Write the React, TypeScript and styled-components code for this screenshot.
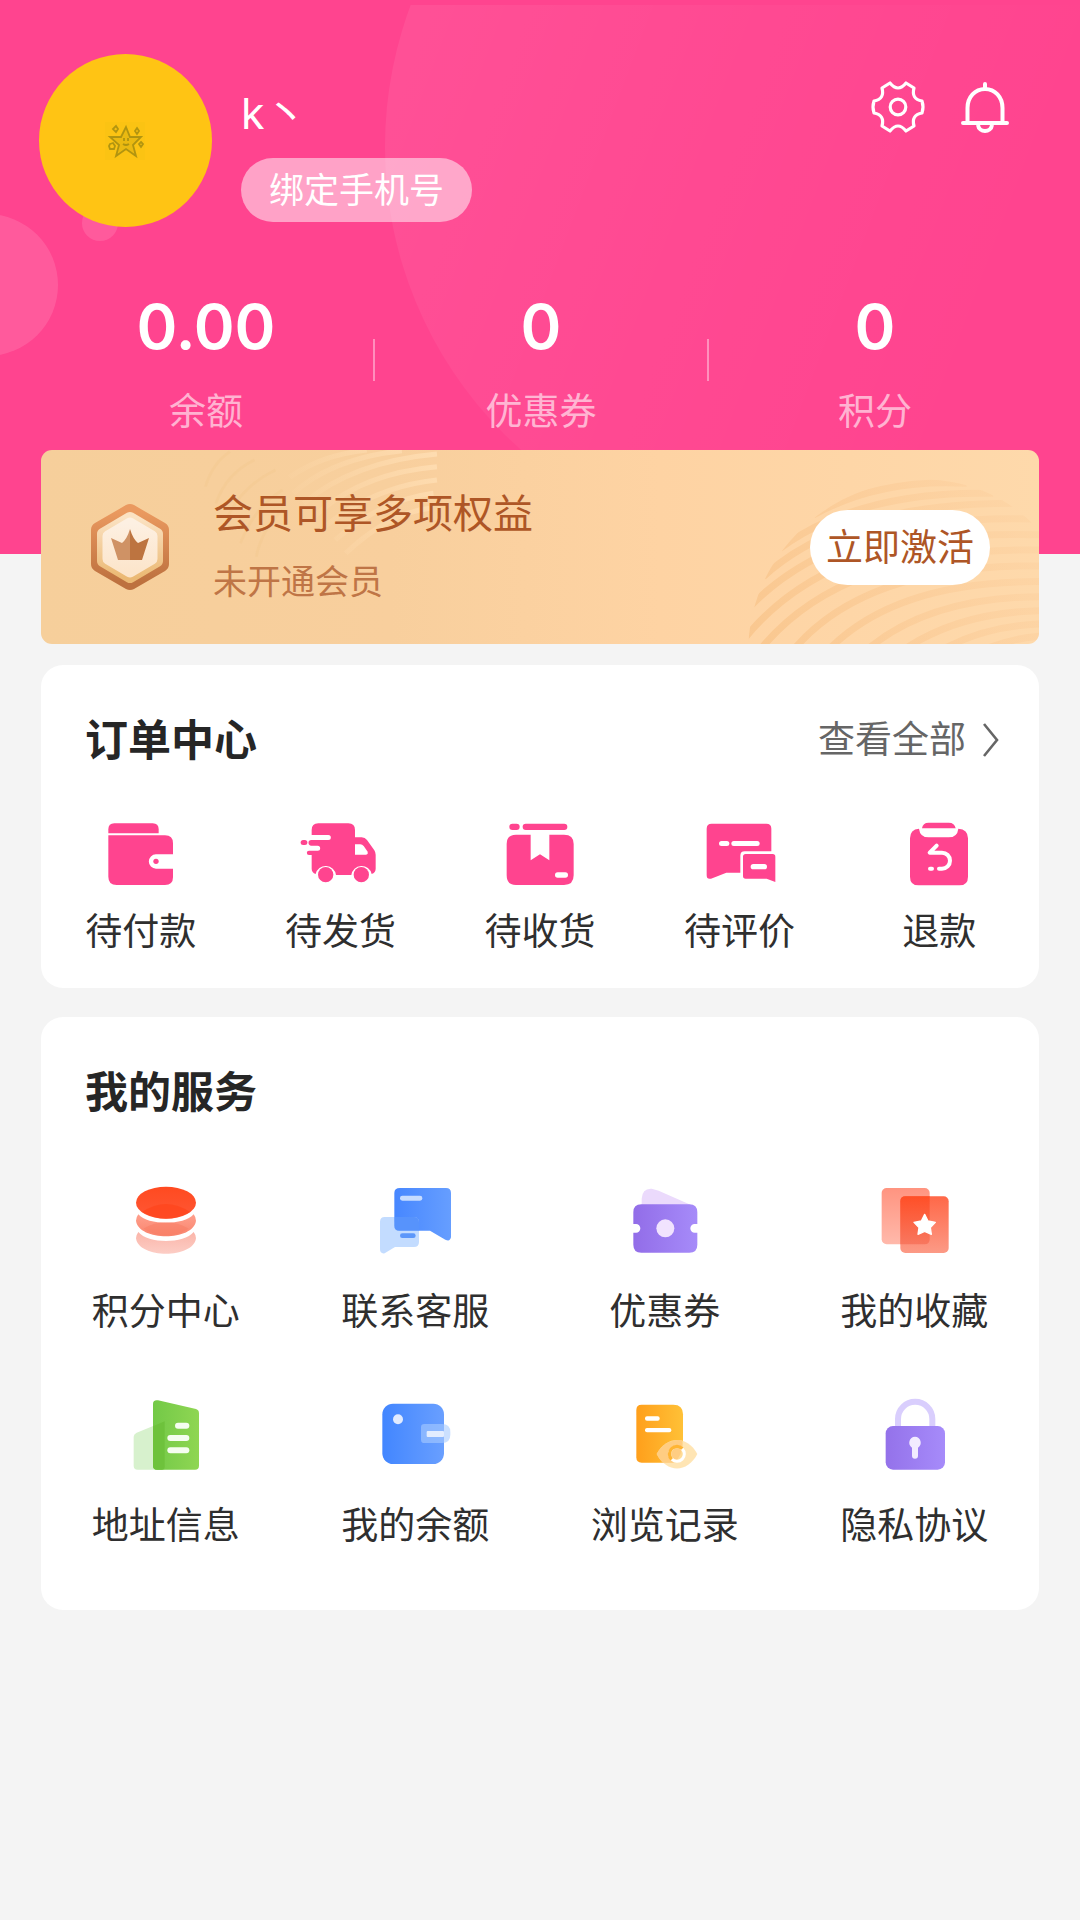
import React from "react";
import styled, { createGlobalStyle } from "styled-components";

const PINK = "#ff448f";

const GlobalStyle = createGlobalStyle`
  * { box-sizing: border-box; }
  body {
    margin: 0;
    background: #f4f4f4;
    color: #2f2f2f;
    font-family: "Noto Sans CJK SC", "Noto Sans", sans-serif;
  }
  a { color: inherit; text-decoration: none; }
  button { font: inherit; border: 0; cursor: pointer; }
  ul { list-style: none; margin: 0; padding: 0; }
  svg { display: block; flex: none; }
`;

const Page = styled.main`
  padding-bottom: 60px;
`;

const Hero = styled.header`
  position: relative;
  padding: 54px 39px 119px;
  background: ${PINK};
  color: #fff;
  overflow: hidden;
`;

const HeroArt = styled.svg`
  position: absolute;
  inset: 0;
  width: 100%;
  height: 100%;
`;

const Profile = styled.div`
  position: relative;
  display: flex;
  gap: 29px;
`;

const Avatar = styled.div`
  width: 173px;
  height: 173px;
  flex: none;
  display: grid;
  place-items: center;
  border-radius: 50%;
  background: #ffc414;
`;

const Identity = styled.div`
  flex: 1;
  display: flex;
  flex-direction: column;
  align-items: flex-start;
  gap: 15px;
  padding-top: 29px;
`;

const Name = styled.div`
  font-family: Inter, "Noto Sans CJK SC", sans-serif;
  font-size: 43px;
  line-height: 60px;
`;

const BindButton = styled.button`
  height: 64px;
  padding: 0 28px 4px;
  border-radius: 32px;
  background: rgba(255, 255, 255, 0.5);
  color: #fff;
  font-size: 35px;
  line-height: 60px;
`;

const Tools = styled.div`
  display: flex;
  align-items: flex-start;
  gap: 27px;
  padding: 23px 26px 0 0;
`;

const ToolButton = styled.button`
  padding: 0;
  background: none;
  color: #fff;
`;

const Stats = styled.div`
  position: relative;
  display: grid;
  grid-template-columns: repeat(3, 1fr);
  align-items: center;
  margin-top: 58px;
`;

const Stat = styled.a`
  display: flex;
  align-items: center;

  & + &::before {
    content: "";
    width: 2px;
    height: 42px;
    background: rgba(255, 255, 255, 0.4);
  }
`;

const StatBody = styled.span`
  flex: 1;
  display: flex;
  flex-direction: column;
  gap: 14px;
  text-align: center;
`;

const StatValue = styled.strong`
  font-family: Inter, "Noto Sans CJK SC", sans-serif;
  font-size: 62px;
  font-weight: 600;
  line-height: 84px;
`;

const StatLabel = styled.span`
  color: rgba(255, 255, 255, 0.6);
  font-size: 37px;
  line-height: 52px;
`;

const MemberCard = styled.section`
  position: relative;
  display: flex;
  align-items: center;
  min-height: 194px;
  margin: -104px 41px 21px;
  padding: 0 49px;
  border-radius: 11px;
  background: linear-gradient(90deg, #f6cf9b 0%, #f8cf9d 35%, #fed3a3 62%, #fed9ab 100%);
  overflow: hidden;
`;

const MemberArt = styled.svg`
  position: absolute;
  inset: 0;
  width: 100%;
  height: 100%;
`;

const MemberText = styled.div`
  position: relative;
  flex: 1;
  display: flex;
  flex-direction: column;
  gap: 17px;
  margin-left: 43px;
  padding-bottom: 4px;
`;

const MemberTitle = styled.div`
  color: #ae5626;
  font-size: 40px;
  line-height: 52px;
`;

const MemberNote = styled.div`
  color: #bf7546;
  font-size: 34px;
  line-height: 52px;
`;

const ActivateButton = styled.button`
  position: relative;
  height: 75px;
  padding: 0 16px 4px;
  border-radius: 38px;
  background: #fff;
  color: #ae5626;
  font-size: 37px;
  line-height: 60px;
`;

const Card = styled.section<{ $foot: number }>`
  margin: 0 41px 29px;
  padding: 42px 0 ${(p) => p.$foot}px;
  border-radius: 22px;
  background: #fff;
`;

const CardHead = styled.div<{ $gap: number }>`
  display: flex;
  justify-content: space-between;
  align-items: center;
  margin-bottom: ${(p) => p.$gap}px;
  padding: 0 40px 0 44px;
`;

const CardTitle = styled.h2`
  margin: 0;
  color: #262626;
  font-size: 43px;
  font-weight: 700;
  line-height: 60px;
`;

const MoreLink = styled.a`
  display: flex;
  align-items: center;
  gap: 17px;
  color: #666;
  font-size: 37px;
  line-height: 60px;
`;

const Grid = styled.ul<{ $columns: number }>`
  display: grid;
  grid-template-columns: repeat(${(p) => p.$columns}, 1fr);
  row-gap: 57px;
`;

const Entry = styled.a<{ $gap: number }>`
  display: flex;
  flex-direction: column;
  align-items: center;
  gap: ${(p) => p.$gap}px;
  font-size: 37px;
  line-height: 52px;
`;

const StarDoodle = () => (
  <svg width="44" height="40" viewBox="0 0 44 40" fill="none" stroke="#a08a10" strokeOpacity="0.8" strokeWidth="1.8" aria-hidden="true">
    <rect x="1" y="1" width="40" height="38" fill="#f8c312" stroke="none" opacity="0.6" />
    <path d="M22 6l4 10 11 0-8 8 3 11-10-7-10 7 3-11-9-8 11 0z" fill="#d9b010" fillOpacity="0.5" />
    <path d="M20 17v3M24 17v3M19 23q3 2 6 0" />
    <path d="M12 5l2 3-2 3-3-3zM33 7l2 3-2 3-2-3zM37 21l2 2-2 3-2-3zM6 23l3-1 2 3-1 3H6l-1-3z" />
  </svg>
);

const GearIcon = () => (
  <svg width="60" height="60" viewBox="-30 -30 60 60" fill="none" stroke="currentColor" strokeWidth="3.200" strokeLinejoin="round" aria-hidden="true">
    <circle r="7.800" />
    <path d="M-8-24Q-4-19 0-19T8-24L16-19Q13-8 24-6Q26 0 24 6Q13 8 16 19L8 24Q4 19 0 19T-8 24L-16 19Q-13 8-24 6Q-26 0-24-6Q-13-8-16-19Z" />
  </svg>
);

const BellIcon = () => (
  <svg width="60" height="60" viewBox="-30 -30 60 60" fill="none" stroke="currentColor" strokeWidth="4" strokeLinecap="round" aria-hidden="true">
    <path d="M0-23v4M-17.500 15V1C-17.500-10-10-18 0-18S17.500-10 17.500 1V15M-22 16H22" />
    <path d="M-7 18C-6 26 6 26 7 18" strokeLinecap="butt" />
  </svg>
);

const HeroBackdrop = () => (
  <HeroArt viewBox="0 0 1080 554" preserveAspectRatio="xMidYMin slice" aria-hidden="true">
    <defs>
      <linearGradient id="glow" x1="0" y1="0.3" x2="0.8" y2="0.6">
        <stop offset="0" stopColor="#fff" stopOpacity="0.07" />
        <stop offset="0.5" stopColor="#fff" stopOpacity="0.03" />
        <stop offset="1" stopColor="#fff" stopOpacity="0" />
      </linearGradient>
      <clipPath id="heroClip">
        <rect y="5" width="1080" height="549" />
      </clipPath>
    </defs>
    <circle cx="790" cy="147" r="405" fill="url(#glow)" clipPath="url(#heroClip)" />
    <circle cx="-13" cy="285" r="71" fill="#fff" fillOpacity="0.12" />
    <circle cx="100" cy="223" r="18" fill="#fff" fillOpacity="0.12" />
  </HeroArt>
);

const MemberBackdrop = () => (
  <MemberArt viewBox="0 0 998 194" preserveAspectRatio="none" aria-hidden="true">
    <defs>
      <linearGradient id="duneR" gradientUnits="userSpaceOnUse" x1="150" y1="600" x2="1018" y2="200">
        <stop offset="0" stopColor="#f9c68d" stopOpacity="0.9" />
        <stop offset="1" stopColor="#fbcb98" stopOpacity="0.25" />
      </linearGradient>
      <linearGradient id="duneL" gradientUnits="userSpaceOnUse" x1="700" y1="200" x2="1160" y2="40">
        <stop offset="0" stopColor="#fdd9ab" stopOpacity="0" />
        <stop offset="1" stopColor="#fedcb0" stopOpacity="1" />
      </linearGradient>
      <clipPath id="discR">
        <path d="M145 612C160 330 400 118 680 118C830 125 930 180 1018 270V612z" />
      </clipPath>
    </defs>
    <g transform="translate(659 -10) scale(0.3333)" fill="none" stroke="url(#duneR)" strokeWidth="21" clipPath="url(#discR)">
      <path d="M340 225Q540 115 800 130" />
      <path d="M240 325Q480 150 880 160" />
      <path d="M190 410Q430 190 940 190" />
      <path d="M150 500Q420 220 1000 237" />
      <path d="M130 600Q400 260 1030 285" />
      <path d="M180 630Q430 320 1030 330" />
      <path d="M280 630Q500 370 1030 378" />
      <path d="M385 630Q590 420 1030 425" />
      <path d="M500 630Q690 470 1030 470" />
      <path d="M610 630Q780 515 1030 512" />
      <path d="M725 630Q860 555 1030 552" />
      <path d="M850 630Q930 595 1030 588" />
    </g>
    <g transform="translate(-11 -10) scale(0.3508 0.3333)" fill="none" stroke="url(#duneL)" strokeWidth="15">
      <path d="M740 112Q830 45 960 30" />
      <path d="M750 160Q860 55 1060 32" />
      <path d="M780 190Q920 65 1160 42" />
      <path d="M810 230Q940 100 1160 80" />
      <path d="M840 260Q980 140 1160 120" />
      <path d="M870 300Q1000 180 1150 160" />
      <path d="M900 340Q1020 220 1140 205" />
    </g>
    <g transform="translate(-11 -10) scale(0.3508 0.3333)" fill="none" stroke="#f3c78f" strokeOpacity="0.4" strokeWidth="8">
      <path d="M500 140Q520 70 570 35" />
      <path d="M530 190Q560 100 640 60" />
      <path d="M560 240Q600 140 700 90" />
      <path d="M600 310Q640 200 720 150" />
      <path d="M645 350Q660 270 720 210" />
    </g>
  </MemberArt>
);

const Badge = styled.svg`
  position: relative;
`;

const CrownBadge = () => (
  <Badge width="80" height="88" viewBox="0 0 80 88" strokeLinejoin="round" aria-hidden="true">
    <defs>
      <linearGradient id="rim" x1="0" y1="0" x2="0" y2="1">
        <stop offset="0" stopColor="#ea995f" />
        <stop offset="1" stopColor="#bd713f" />
      </linearGradient>
      <linearGradient id="ring" x1="0" y1="0" x2="0" y2="1">
        <stop offset="0" stopColor="#fbe2c2" />
        <stop offset="1" stopColor="#ebb974" />
      </linearGradient>
      <linearGradient id="face" x1="0" y1="0" x2="0" y2="1">
        <stop offset="0" stopColor="#fdf0e2" />
        <stop offset="1" stopColor="#fce5cb" />
      </linearGradient>
    </defs>
    <path d="M40 9L71 27V61L40 79L9 61V27z" fill="url(#rim)" stroke="url(#rim)" strokeWidth="16" />
    <path d="M40 15L67 31V58L40 74L13 58V31z" fill="url(#ring)" stroke="url(#ring)" strokeWidth="12" />
    <path d="M40 20L62 33V56L40 69L18 56V33z" fill="url(#face)" stroke="url(#face)" strokeWidth="11" />
    <path d="M40 26V57H28L21 35L32 40Q37 36 40 26z" fill="#cf9265" />
    <path d="M40 26V57H52L59 35L48 40Q43 36 40 26z" fill="#bd7440" />
  </Badge>
);

const Chevron = () => (
  <svg width="16" height="40" viewBox="0 -6 16 40" fill="none" stroke="#666" strokeWidth="2.600" aria-hidden="true">
    <path d="M1 1L14 17L1 33" />
  </svg>
);

const OrderIcon = ({ x, children }: { x: number; children: React.ReactNode }) => (
  <svg width="84" height="72" viewBox={`${x} 78 252 216`} fill={PINK} aria-hidden="true">
    {children}
  </svg>
);

const WalletIcon = () => (
  <OrderIcon x={117}>
    <path d="M145 130V118Q145 100 163 100H278Q296 100 296 118V130z" />
    <path d="M145 136H315Q339 136 339 160V193H288A21 21 0 0 0 288 236H339V262Q339 285 315 285H170Q145 285 145 260z" />
    <circle cx="288" cy="214" r="8" />
  </OrderIcon>
);

const TruckIcon = () => (
  <OrderIcon x={714}>
    <path d="M755 135V120Q755 100 775 100H865Q885 100 885 120V142H905Q915 142 921 150L943 181Q947 187 947 194V236Q947 248 935 252A31 31 0 0 0 874 255H828A31 31 0 0 0 767 252Q755 247 755 236V195H747A6 6 0 0 1 747 182H773A7 7 0 0 0 773 167H754A8 8 0 0 1 754 150H805A7 7 0 0 0 805 135z" />
    <path d="M885 163H901Q907 163 911 168L922 184Q926 194 918 194H885z" fill="#fff" />
    <circle cx="797" cy="254" r="23" />
    <circle cx="904" cy="254" r="23" />
    <rect x="722" y="150" width="20" height="15" rx="7.500" />
  </OrderIcon>
);

const ParcelIcon = () => (
  <OrderIcon x={1314}>
    <rect x="1348" y="101" width="31" height="19" rx="9.500" />
    <rect x="1388" y="101" width="134" height="19" rx="9.500" />
    <path d="M1412 134V211L1440 193L1468 211V134H1512Q1541 134 1541 162V256Q1541 285 1512 285H1368Q1340 285 1340 256V162Q1340 134 1368 134z" />
    <rect x="1485" y="247" width="39" height="16" rx="8" fill="#fff" />
  </OrderIcon>
);

const ReviewIcon = () => (
  <OrderIcon x={413}>
    <path d="M454 101H618Q633 101 633 116V184H553Q540 184 540 197V248H498L452 266Q439 269 439 256V116Q439 101 454 101z" />
    <path d="M556 192H637Q645 192 645 200V276L619 266H556Q548 266 548 258V200Q548 192 556 192z" />
    <g fill="#fff">
      <rect x="476" y="153" width="31" height="15" rx="7.500" />
      <rect x="513" y="153" width="85" height="15" rx="7.500" />
      <rect x="571" y="222" width="49" height="16" rx="8" />
    </g>
  </OrderIcon>
);

const RefundIcon = () => (
  <OrderIcon x={1011}>
    <path d="M1086 115Q1088 98 1106 98H1166Q1184 98 1187 115z" />
    <path d="M1077 116Q1080 142 1106 142H1166Q1192 142 1195 116Q1224 118 1224 145V260Q1224 286 1198 286H1076Q1050 286 1050 260V145Q1050 118 1077 116z" />
    <g fill="none" stroke="#fff" strokeWidth="12" strokeLinecap="round" strokeLinejoin="round">
      <path d="M1130 167L1109 188H1146A23 23 0 0 1 1146 236H1137" />
      <path d="M1110 236H1116" />
    </g>
  </OrderIcon>
);

const ServiceIcon = ({ x, y = 54, children }: { x: number; y?: number; children: React.ReactNode }) => (
  <svg width="84" height="84" viewBox={`${x} ${y} 252 252`} aria-hidden="true">
    {children}
  </svg>
);

const Fade = ({ id, from, to, down }: { id: string; from: string; to: string; down?: boolean }) => (
  <defs>
    <linearGradient id={id} x1="0" y1="0" x2={down ? "0" : "1"} y2={down ? "1" : "0"}>
      <stop offset="0" stopColor={from} />
      <stop offset="1" stopColor={to} />
    </linearGradient>
  </defs>
);

const CoinsIcon = () => (
  <ServiceIcon x={192}>
    <Fade id="coinTop" from="#ff4a20" to="#ff5735" down />
    <Fade id="coinMid" from="#ff9f8c" to="#f9856e" down />
    <Fade id="coinLow" from="#fbb5a9" to="#fccdc5" down />
    <ellipse cx="318" cy="128" rx="90" ry="48" fill="url(#coinTop)" />
    <path d="M246 156Q318 108 390 156Q318 196 246 156z" fill="#ff451b" opacity="0.7" />
    <path d="M235 163C264 197 372 197 401 163Q408 172 408 182C400 244 236 244 228 182Q228 172 235 163z" fill="url(#coinMid)" />
    <path d="M250 206Q318 168 386 206Q318 246 250 206z" fill="#f87b62" opacity="0.5" />
    <path d="M235 216C264 252 372 252 401 216Q408 225 408 235C400 297 236 297 228 235Q228 225 235 216z" fill="url(#coinLow)" />
  </ServiceIcon>
);

const ChatIcon = () => (
  <ServiceIcon x={939}>
    <Fade id="chat" from="#4787ff" to="#669eff" />
    <path d="M1020 84H1158Q1173 84 1173 99V232Q1170 246 1156 239L1110 212H1018Q1003 212 1003 197V99Q1003 84 1020 84z" fill="url(#chat)" />
    <path d="M974 171H1062Q1077 171 1077 186V246Q1077 261 1062 261H1005L974 280Q960 282 960 268V186Q960 171 974 171z" fill="#b6d4ff" fillOpacity="0.82" />
    <path d="M1003 171H1062Q1077 171 1077 186V212H1018Q1003 212 1003 197z" fill="#4a8afc" fillOpacity="0.85" />
    <rect x="1020" y="107" width="67" height="15" rx="7" fill="#c7dcff" />
    <rect x="1020" y="220" width="47" height="14" rx="7" fill="#5c97fa" />
  </ServiceIcon>
);

const CouponIcon = () => (
  <ServiceIcon x={189}>
    <Fade id="coupon" from="#926de8" to="#a68bf9" />
    <path d="M245 140V116Q247 84 275 86L296 92L400 138z" fill="#ebdafc" />
    <path d="M244 133H388Q412 133 412 157V192H404A13 13 0 0 0 404 218H412V254Q412 278 388 278H244Q220 278 220 254V218H228A13 13 0 0 0 228 192H220V157Q220 133 244 133z" fill="url(#coupon)" />
    <circle cx="316" cy="205" r="27" fill="#f1e3fe" />
  </ServiceIcon>
);

const FavoriteIcon = () => (
  <ServiceIcon x={936}>
    <Fade id="favBack" from="#ff9480" to="#ffb9ab" down />
    <Fade id="favFront" from="#ff6848" to="#fc9a86" down />
    <Fade id="favOver" from="#ff4f27" to="#f8775f" down />
    <rect x="965" y="84" width="144" height="169" rx="15" fill="url(#favBack)" />
    <rect x="1021" y="109" width="145" height="170" rx="15" fill="url(#favFront)" />
    <path d="M1036 109H1109V238Q1109 253 1094 253H1021V124Q1021 109 1036 109z" fill="url(#favOver)" />
    <path d="M1094 163L1104 183L1126 187L1111 203L1114 223L1094 214L1074 223L1077 203L1062 187L1084 183z" fill="#fff" stroke="#fff" strokeWidth="4" strokeLinejoin="round" />
  </ServiceIcon>
);

const AddressIcon = () => (
  <ServiceIcon x={192} y={66}>
    <Fade id="tower" from="#73c947" to="#8fd653" />
    <path d="M230 188L314 154V299H233Q221 299 221 287V200Q221 192 230 188z" fill="#d7f1cd" />
    <path d="M294 91L408 117Q417 120 417 130V287Q417 299 405 299H291Q279 299 279 287V102Q279 89 294 91z" fill="url(#tower)" />
    <path d="M279 169L314 154V290Q314 299 305 299H291Q279 299 279 287z" fill="#6ec23c" />
    <g fill="#f5fdf0">
      <rect x="345" y="158" width="43" height="18" rx="9" />
      <rect x="322" y="195" width="66" height="18" rx="9" />
      <rect x="322" y="232" width="66" height="18" rx="9" />
    </g>
  </ServiceIcon>
);

const BalanceIcon = () => (
  <ServiceIcon x={939} y={66}>
    <Fade id="balance" from="#4286ff" to="#699fff" />
    <rect x="967" y="101" width="185" height="181" rx="32" fill="url(#balance)" />
    <circle cx="1014" cy="148" r="15" fill="#e1ebff" />
    <path d="M1093 162H1146Q1171 162 1171 186V194Q1171 219 1146 219H1093Q1083 219 1083 209V172Q1083 162 1093 162z" fill="#a9cbff" fillOpacity="0.6" />
    <rect x="1100" y="183" width="52" height="18" rx="3" fill="#e3edff" />
  </ServiceIcon>
);

const HistoryIcon = () => (
  <ServiceIcon x={189} y={66}>
    <Fade id="record" from="#ff9f1b" to="#ffc137" />
    <path d="M245 104H340Q369 104 369 133V250Q369 278 341 278H245Q229 278 229 262V120Q229 104 245 104z" fill="url(#record)" />
    <rect x="255" y="139" width="44" height="13" rx="6" fill="#fff" />
    <rect x="255" y="174" width="79" height="13" rx="6" fill="#fff" />
    <path d="M290 252C320 196 382 196 412 252C382 310 320 310 290 252z" fill="#ffe1a7" fillOpacity="0.85" />
    <path d="M290 252C306 222 335 207 367 211Q369 260 341 278H308Q298 268 290 252z" fill="#ffcd82" />
    <circle cx="351" cy="252" r="22" fill="none" stroke="#fff" strokeWidth="9" />
    <path d="M335 268A22 22 0 0 1 367 236" fill="none" stroke="#ffb534" strokeWidth="10" />
  </ServiceIcon>
);

const PrivacyIcon = () => (
  <ServiceIcon x={936} y={66}>
    <Fade id="lock" from="#9472ea" to="#a68bfa" />
    <path d="M1014 170V147A51 51 0 0 1 1117 147V170" fill="none" stroke="#d9cefd" strokeWidth="18" />
    <rect x="977" y="168" width="178" height="131" rx="22" fill="url(#lock)" />
    <path d="M1065 200A18 18 0 0 1 1074 233V257A9 9 0 0 1 1056 257V233A18 18 0 0 1 1065 200z" fill="#f2ecff" />
  </ServiceIcon>
);

const stats = [
  { value: "0.00", label: "余额" },
  { value: "0", label: "优惠券" },
  { value: "0", label: "积分" },
];

const orders = [
  { label: "待付款", Icon: WalletIcon },
  { label: "待发货", Icon: TruckIcon },
  { label: "待收货", Icon: ParcelIcon },
  { label: "待评价", Icon: ReviewIcon },
  { label: "退款", Icon: RefundIcon },
];

const services = [
  { label: "积分中心", Icon: CoinsIcon },
  { label: "联系客服", Icon: ChatIcon },
  { label: "优惠券", Icon: CouponIcon },
  { label: "我的收藏", Icon: FavoriteIcon },
  { label: "地址信息", Icon: AddressIcon },
  { label: "我的余额", Icon: BalanceIcon },
  { label: "浏览记录", Icon: HistoryIcon },
  { label: "隐私协议", Icon: PrivacyIcon },
];

export default function App() {
  return (
    <Page lang="zh-CN">
      <GlobalStyle />
      <Hero>
        <HeroBackdrop />
        <Profile>
          <Avatar>
            <StarDoodle />
          </Avatar>
          <Identity>
            <Name>k丶</Name>
            <BindButton type="button">绑定手机号</BindButton>
          </Identity>
          <Tools>
            <ToolButton type="button" aria-label="设置">
              <GearIcon />
            </ToolButton>
            <ToolButton type="button" aria-label="消息">
              <BellIcon />
            </ToolButton>
          </Tools>
        </Profile>
        <Stats>
          {stats.map(({ value, label }) => (
            <Stat key={label} href="#">
              <StatBody>
                <StatValue>{value}</StatValue>
                <StatLabel>{label}</StatLabel>
              </StatBody>
            </Stat>
          ))}
        </Stats>
      </Hero>

      <MemberCard>
        <MemberBackdrop />
        <CrownBadge />
        <MemberText>
          <MemberTitle>会员可享多项权益</MemberTitle>
          <MemberNote>未开通会员</MemberNote>
        </MemberText>
        <ActivateButton type="button">立即激活</ActivateButton>
      </MemberCard>

      <Card $foot={33}>
        <CardHead $gap={49}>
          <CardTitle>订单中心</CardTitle>
          <MoreLink href="#">
            查看全部
            <Chevron />
          </MoreLink>
        </CardHead>
        <Grid $columns={5}>
          {orders.map(({ label, Icon }) => (
            <li key={label}>
              <Entry href="#" $gap={15}>
                <Icon />
                {label}
              </Entry>
            </li>
          ))}
        </Grid>
      </Card>

      <Card $foot={61}>
        <CardHead $gap={59}>
          <CardTitle>我的服务</CardTitle>
        </CardHead>
        <Grid $columns={4}>
          {services.map(({ label, Icon }) => (
            <li key={label}>
              <Entry href="#" $gap={21}>
                <Icon />
                {label}
              </Entry>
            </li>
          ))}
        </Grid>
      </Card>
    </Page>
  );
}
